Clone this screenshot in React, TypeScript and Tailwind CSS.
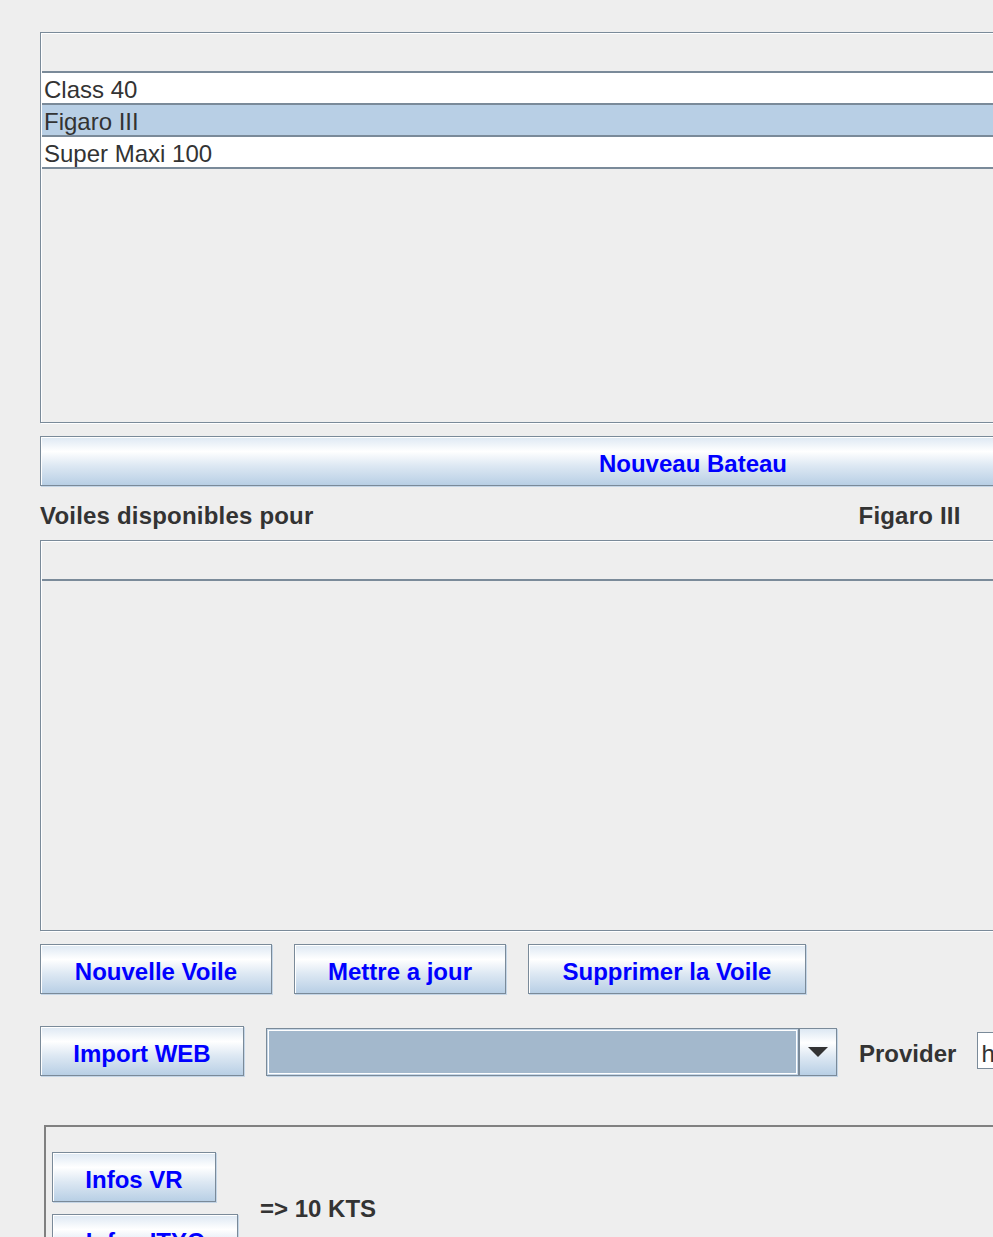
import type { ReactNode } from "react";

const btnBase =
  "flex shrink-0 items-center justify-center h-[50px] pt-[5px] border border-[#7a8a99] bg-[linear-gradient(to_bottom,#dde8f3_0%,#ffffff_30%,#dde8f3_60%,#b8cfe5_100%)] shadow-[inset_1px_1px_0_#ffffff,1px_1px_0_#c4d5e6] font-bold text-[#0000ff] whitespace-nowrap";

const MetalButton = ({ label, className }: { label: string; className: string }) => (
  <div className={`${btnBase} ${className}`}>{label}</div>
);

// scroll pane with empty table header, like the Swing JTable
const TablePane = ({ children }: { children?: ReactNode }) => (
  <div className="w-[1306px] h-[391px] shrink-0 border border-[#7a8a99] shadow-[inset_1px_1px_0_#ffffff,1px_1px_0_#ffffff] pl-px pt-px">
    <div className="h-[39px] border-b-2 border-[#7a8a99]" />
    {children}
  </div>
);

const rows = [
  { name: "Class 40", selected: false },
  { name: "Figaro III", selected: true },
  { name: "Super Maxi 100", selected: false },
];

export default function App() {
  return (
    <div className="h-[1237px] w-full overflow-hidden bg-[#eeeeee] font-['Liberation_Sans',Arial,sans-serif] text-[24px] leading-[24px] text-[#333333]">
      <div className="w-[1400px] pl-[40px] pt-[32px] flex flex-col">
        <TablePane>
          {rows.map((r) => (
            <div
              key={r.name}
              className={`h-[32px] border-b-2 border-[#7a8a99] pl-[2px] pt-[5px] ${
                r.selected ? "bg-[#b8cfe5]" : "bg-white"
              }`}
            >
              {r.name}
            </div>
          ))}
        </TablePane>

        <MetalButton label="Nouveau Bateau" className="mt-[13px] w-[1306px]" />

        <div className="mt-[18px] h-[24px] flex font-bold tracking-[0.2px]">
          <span>Voiles disponibles pour</span>
          <span className="ml-[545px]">Figaro III</span>
        </div>

        <div className="mt-[12px]">
          <TablePane />
        </div>

        <div className="mt-[13px] flex">
          <MetalButton label="Nouvelle Voile" className="w-[232px]" />
          <MetalButton label="Mettre a jour" className="ml-[22px] w-[212px]" />
          <MetalButton label="Supprimer la Voile" className="ml-[22px] w-[278px]" />
        </div>

        <div className="mt-[32px] flex items-start">
          <MetalButton label="Import WEB" className="w-[204px]" />
          <div className="ml-[22px] mt-[2px] w-[571px] h-[48px] flex border border-[#7a8a99] shadow-[1px_1px_0_#c4d5e6]">
            <div className="flex-1 bg-[#c6d7e8] p-px">
              <div className="h-full border border-white bg-[#a3b8cc]" />
            </div>
            <div className="w-[38px] flex items-center justify-center border-l-2 border-[#7a8a99] bg-[linear-gradient(to_bottom,#dde8f3_0%,#ffffff_30%,#dde8f3_60%,#b8cfe5_100%)]">
              <svg width="20" height="10" viewBox="0 0 20 10">
                <polygon points="0,0 20,0 10,10" fill="#333333" />
              </svg>
            </div>
          </div>
          <span className="ml-[22px] mt-[16px] font-bold">Provider</span>
          <div className="ml-[21px] mt-[6px] w-[200px] h-[37px] border border-[#7a8a99] bg-white shadow-[inset_1px_1px_0_#ffffff] pl-[3px] pt-[9px]">
            h
          </div>
        </div>

        <div className="mt-[49px] ml-[4px] w-[1300px] h-[300px] border-t-2 border-l-2 border-[#808080] pl-[6px] pt-[25px] flex items-start">
          <div className="flex flex-col gap-[12px]">
            <MetalButton label="Infos VR" className="w-[164px]" />
            <MetalButton label="Infos ITYC" className="w-[186px]" />
          </div>
          <span className="ml-[22px] mt-[45px] font-bold">=&gt; 10 KTS</span>
        </div>
      </div>
    </div>
  );
}
